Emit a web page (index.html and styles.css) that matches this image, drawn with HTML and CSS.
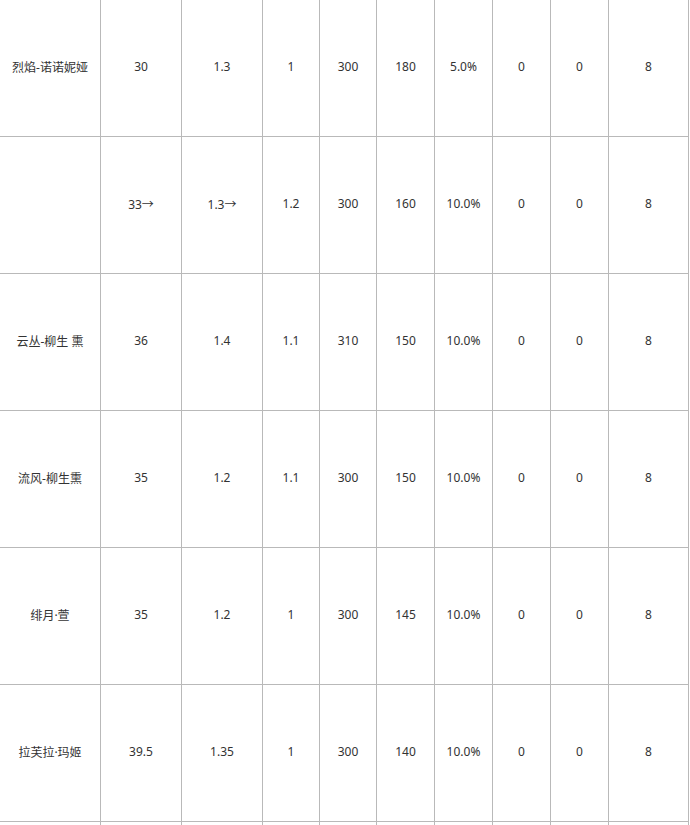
FILE: index.html
```html
<!DOCTYPE html>
<html lang="zh">
<head>
<meta charset="utf-8">
<link rel="stylesheet" href="styles.css">
</head>
<body>
<div class="grid">
  <div class="c">烈焰-诺诺妮娅</div><div class="c">30</div><div class="c">1.3</div><div class="c">1</div><div class="c">300</div><div class="c">180</div><div class="c">5.0%</div><div class="c">0</div><div class="c">0</div><div class="c">8</div>
  <div class="c"></div><div class="c">33→</div><div class="c">1.3→</div><div class="c">1.2</div><div class="c">300</div><div class="c">160</div><div class="c">10.0%</div><div class="c">0</div><div class="c">0</div><div class="c">8</div>
  <div class="c">云丛-柳生 熏</div><div class="c">36</div><div class="c">1.4</div><div class="c">1.1</div><div class="c">310</div><div class="c">150</div><div class="c">10.0%</div><div class="c">0</div><div class="c">0</div><div class="c">8</div>
  <div class="c">流风-柳生熏</div><div class="c">35</div><div class="c">1.2</div><div class="c">1.1</div><div class="c">300</div><div class="c">150</div><div class="c">10.0%</div><div class="c">0</div><div class="c">0</div><div class="c">8</div>
  <div class="c">绯月·萱</div><div class="c">35</div><div class="c">1.2</div><div class="c">1</div><div class="c">300</div><div class="c">145</div><div class="c">10.0%</div><div class="c">0</div><div class="c">0</div><div class="c">8</div>
  <div class="c">拉芙拉·玛姬</div><div class="c">39.5</div><div class="c">1.35</div><div class="c">1</div><div class="c">300</div><div class="c">140</div><div class="c">10.0%</div><div class="c">0</div><div class="c">0</div><div class="c">8</div>
  <div class="c"></div><div class="c"></div><div class="c"></div><div class="c"></div><div class="c"></div><div class="c"></div><div class="c"></div><div class="c"></div><div class="c"></div><div class="c"></div>
</div>
</body>
</html>
```

FILE: styles.css
```css
html, body {
  margin: 0;
  padding: 0;
  background: #ffffff;
  overflow: hidden;
}
.grid {
  display: grid;
  grid-template-columns: 101px 81px 81px 57px 57px 58px 58px 58px 58px 80px;
  grid-auto-rows: 137px;
  font-family: "Noto Sans", "Noto Sans CJK SC", sans-serif;
  font-size: 12px;
  color: #333333;
}
.c {
  box-sizing: border-box;
  border-right: 1px solid #b9b9b9;
  border-bottom: 1px solid #b9b9b9;
  padding-bottom: 3px;
  display: flex;
  align-items: center;
  justify-content: center;
  white-space: nowrap;
}
```
